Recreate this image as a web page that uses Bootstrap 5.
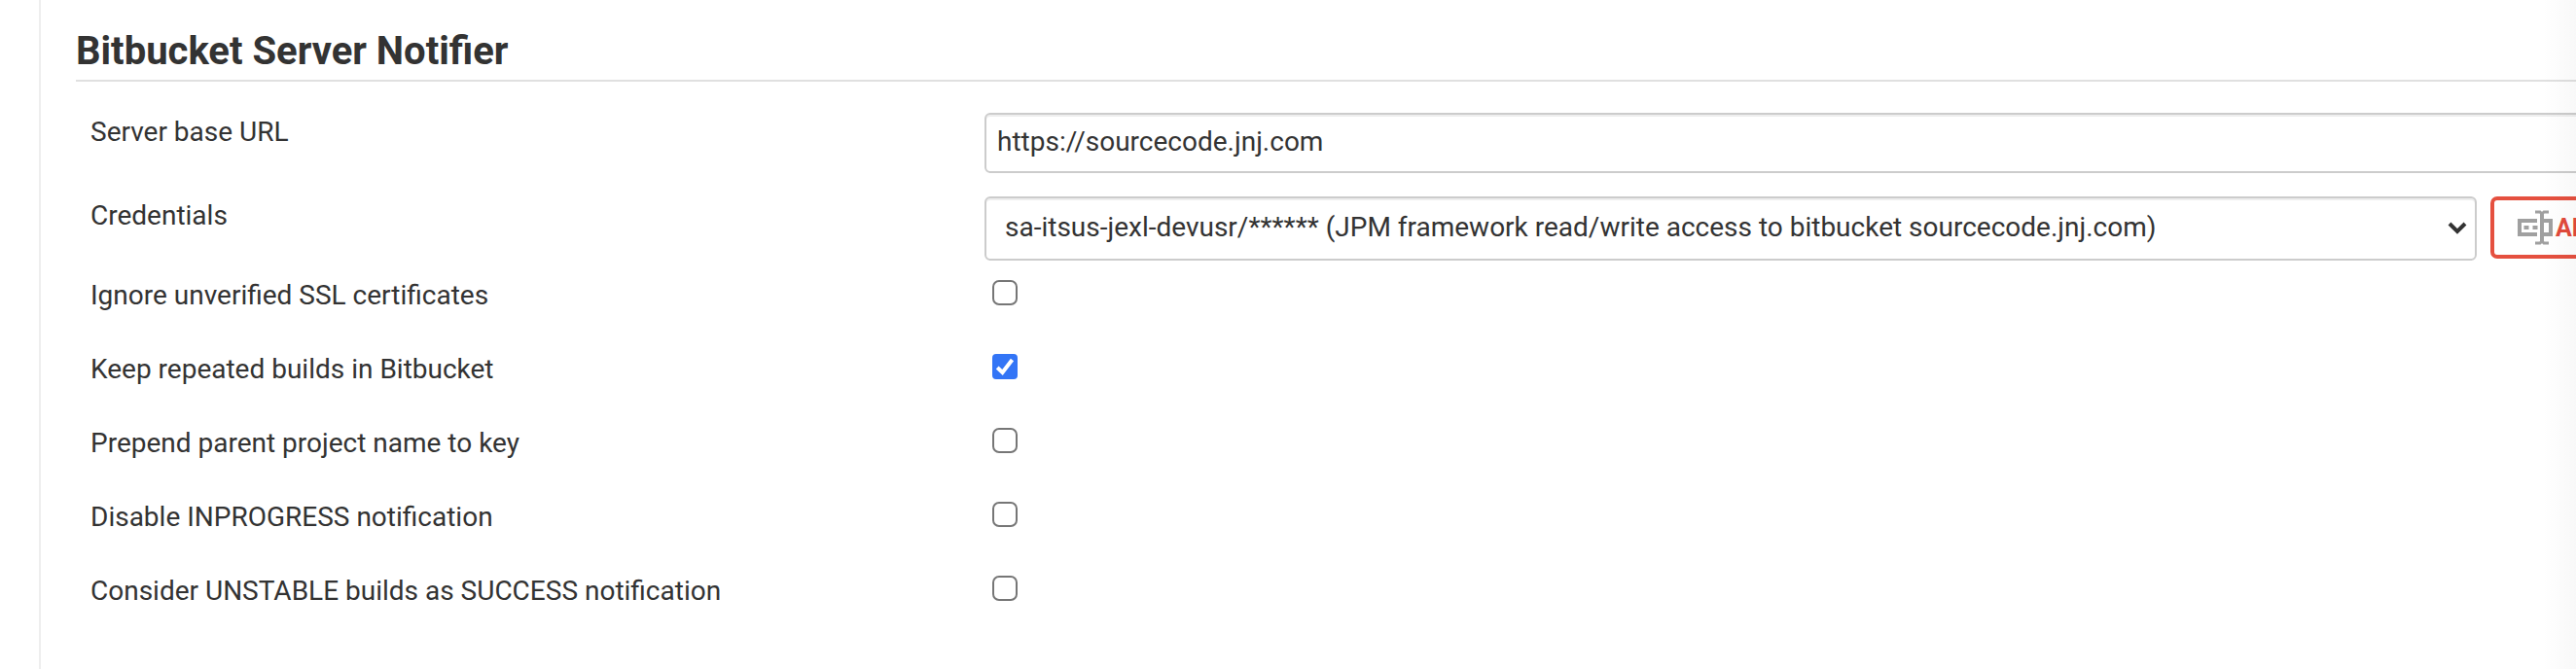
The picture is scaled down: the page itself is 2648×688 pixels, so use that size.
<!DOCTYPE html>
<html lang="en">
<head>
<meta charset="utf-8">
<title>Bitbucket Server Notifier</title>
<link href="https://cdn.jsdelivr.net/npm/bootstrap@5.3.0/dist/css/bootstrap.min.css" rel="stylesheet">
<style>
  body { font-family: Roboto, "Liberation Sans", sans-serif; font-size: 28px; line-height: 40px; color: #333; background: #fff; height: 688px; }
  .panel { margin-left: 40px; border-left: 2px solid #eee; height: 688px; padding-left: 36px; }
  .section-title { font-size: 40px; line-height: 48px; font-weight: 700; padding: 29px 0 5px; border-bottom: 2px solid #e0e0e0; color: #333; }
  .setting { padding-left: 15px; }
  .setting-name { width: 919px; flex: none; }
  .setting-field { height: 86px; padding-top: 32px; }
  .setting-check { height: 76px; }
  .checks { padding-top: 28px; }
  .form-control, .form-select { font-size: 28px; line-height: 40px; color: #333; border: 2px solid #ccc; border-radius: 6px; box-shadow: inset 0 2px 0 #eee; }
  .form-control { height: 62px; width: 1680px; padding: 0 11px 3px; }
  .form-select { height: 66px; width: 1534px; padding: 0 40px 2px 19px;
    background-image: url("data:image/svg+xml,%3Csvg xmlns='http://www.w3.org/2000/svg' viewBox='0 0 20 14'%3E%3Cpath d='M2 2l8 8 8-8' fill='none' stroke='%23333' stroke-width='4'/%3E%3C/svg%3E");
    background-size: 20px 14px; background-position: right 8px center; }
  .form-check-input { width: 26px; height: 26px; margin: 4px 0 0 8px; border: 2px solid #767676; border-radius: 5px; }
  .form-check-input:checked { background-color: #3375f6; border-color: #3375f6; border-radius: 4px;
    background-image: url("data:image/svg+xml,%3Csvg xmlns='http://www.w3.org/2000/svg' viewBox='0 0 26 26'%3E%3Cpath d='M5.200 14l5.300 5L20.500 6' fill='none' stroke='%23fff' stroke-width='4'/%3E%3C/svg%3E"); background-size: 26px 26px; background-position: center; background-origin: border-box; }
  .btn-add { height: 64px; width: 170px; margin-left: 14px; padding: 0 0 0 23px; border: 4px solid #e5503f; border-radius: 7px; color: #e24a3b; font-size: 25px; font-weight: 700; line-height: 1; flex: none; }
  .btn-add span { margin-left: 2px; }
  .edge-fade { width: 34px; background: linear-gradient(to right, rgba(0,0,0,0), rgba(0,0,0,.028)); pointer-events: none; }
</style>
</head>
<body class="overflow-hidden position-relative">
<main class="panel">
  <h2 class="section-title m-0">Bitbucket Server Notifier</h2>
  <form>
    <div class="setting setting-field d-flex">
      <label class="setting-name" for="url">Server base URL</label>
      <input id="url" class="form-control flex-shrink-0" type="text" value="https://sourcecode.jnj.com">
    </div>
    <div class="setting setting-field d-flex">
      <label class="setting-name" for="cred">Credentials</label>
      <select id="cred" class="form-select flex-shrink-0"><option>sa-itsus-jexl-devusr/****** (JPM framework read/write access to bitbucket sourcecode.jnj.com)</option></select>
      <button class="btn btn-add d-flex align-items-center" type="button">
        <svg width="38" height="36" viewBox="0 0 38 36" fill="none" stroke="#a0a0a0" stroke-width="4" aria-hidden="true">
          <path d="M21 11H3v14h18M28 11h7v14h-7"/>
          <path d="M26 3v30"/>
          <path d="M19 2h5l2 2 2-2h5M19 34h5l2-2 2 2h5" stroke-width="3"/>
          <path d="M7.500 18h5M16.500 18h5"/>
        </svg><span>ADD</span>
      </button>
    </div>
    <div class="checks">
      <div class="setting setting-check d-flex"><label class="setting-name" for="c1">Ignore unverified SSL certificates</label><input id="c1" class="form-check-input" type="checkbox"></div>
      <div class="setting setting-check d-flex"><label class="setting-name" for="c2">Keep repeated builds in Bitbucket</label><input id="c2" class="form-check-input" type="checkbox" checked></div>
      <div class="setting setting-check d-flex"><label class="setting-name" for="c3">Prepend parent project name to key</label><input id="c3" class="form-check-input" type="checkbox"></div>
      <div class="setting setting-check d-flex"><label class="setting-name" for="c4">Disable INPROGRESS notification</label><input id="c4" class="form-check-input" type="checkbox"></div>
      <div class="setting setting-check d-flex"><label class="setting-name" for="c5">Consider UNSTABLE builds as SUCCESS notification</label><input id="c5" class="form-check-input" type="checkbox"></div>
    </div>
  </form>
</main>
<div class="edge-fade position-absolute top-0 bottom-0 end-0"></div>
<script src="https://cdn.jsdelivr.net/npm/bootstrap@5.3.0/dist/js/bootstrap.bundle.min.js"></script>
</body>
</html>
